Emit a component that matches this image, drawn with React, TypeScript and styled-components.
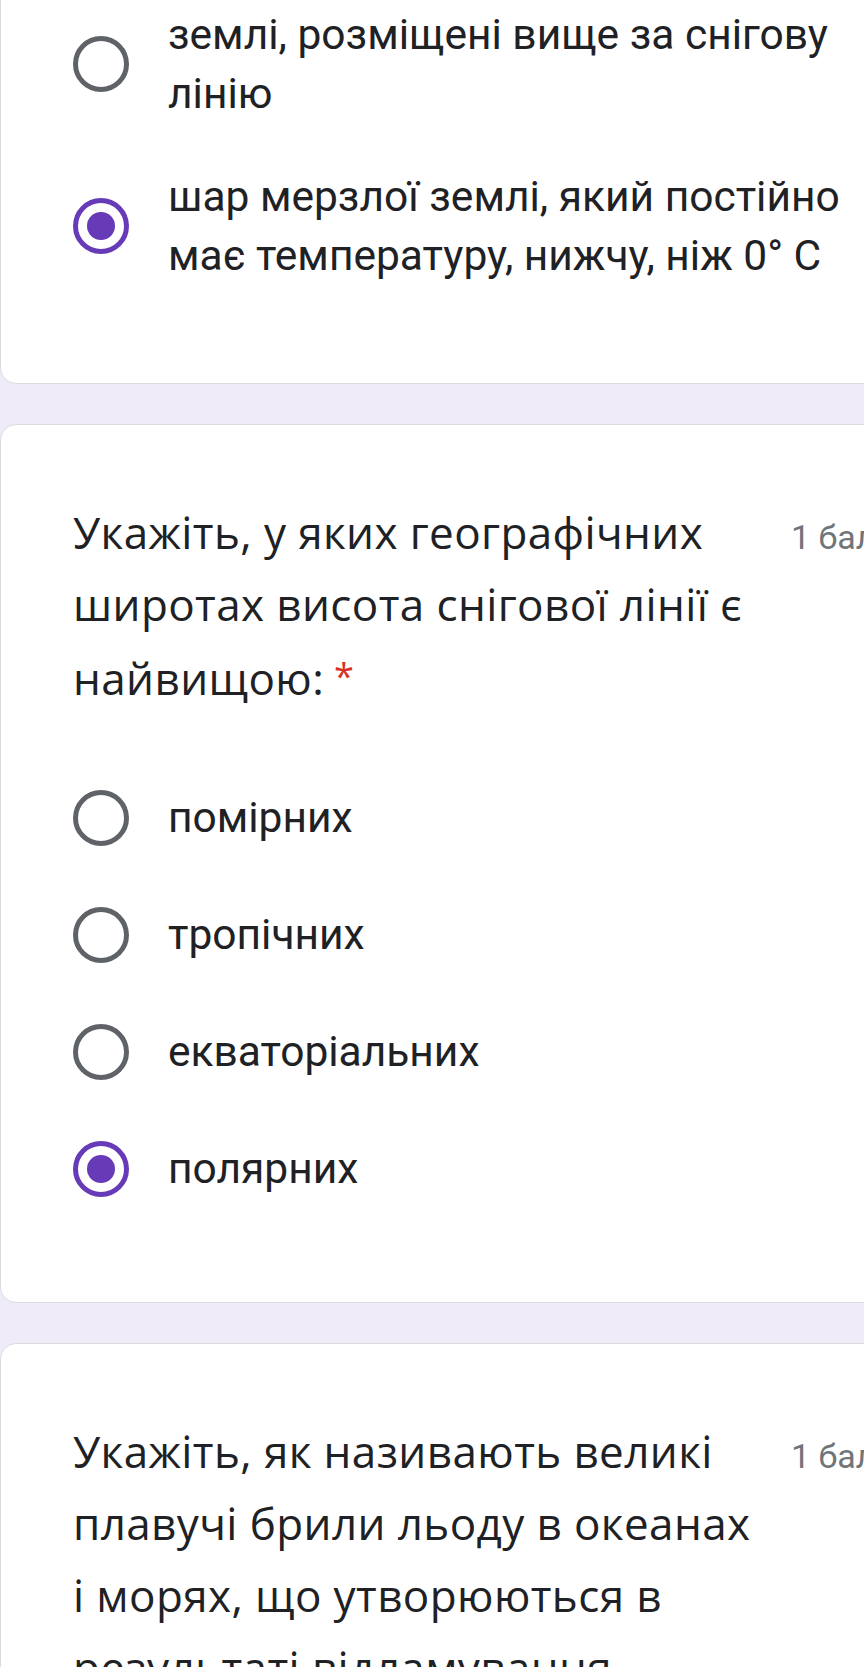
import React from "react";
import styled, { createGlobalStyle } from "styled-components";

const GlobalStyle = createGlobalStyle`
  html, body {
    margin: 0;
    padding: 0;
    background: #f0ebf8;
  }
  body {
    font-family: Roboto, "Noto Sans", sans-serif;
    -webkit-font-smoothing: antialiased;
  }
`;

const Page = styled.div`
  width: 864px;
  height: 1667px;
  overflow: hidden;
  background: #f0ebf8;
  display: flex;
  flex-direction: column;
  gap: 40px;
`;

const Card = styled.section<{ $first?: boolean }>`
  background: #ffffff;
  border: 1px solid #dadce0;
  border-radius: 16px;
  margin-right: -60px;
  margin-top: ${(p) => (p.$first ? "-18px" : "0")};
  padding: ${(p) => (p.$first ? "0 0 76px 72px" : "71px 0 75px 72px")};
  flex: none;
`;

const Header = styled.div`
  display: flex;
  align-items: baseline;
`;

const Title = styled.h2`
  flex: 0 0 690px;
  margin: 0;
  font-family: "Open Sans", "Noto Sans", sans-serif;
  font-weight: 400;
  font-size: 44px;
  line-height: 72px;
  color: #202124;
  letter-spacing: 0.4px;
`;

const Required = styled.span`
  color: #d93025;
  margin-left: 10px;
  font-size: 36px;
  vertical-align: 6px;
`;

const Points = styled.span`
  margin-left: 28px;
  font-family: Roboto, sans-serif;
  font-size: 34px;
  color: #70757a;
  white-space: nowrap;
`;

const Options = styled.div<{ $spaced?: boolean }>`
  display: flex;
  flex-direction: column;
  margin-top: ${(p) => (p.$spaced ? "45px" : "0")};
`;

const Row = styled.label`
  display: flex;
  align-items: center;
  padding: 22px 0;
`;

const RadioBox = styled.span`
  flex: none;
  width: 56px;
  height: 73px;
  display: flex;
  align-items: center;
  justify-content: center;
  margin-right: 39px;
`;

const Radio = styled.span<{ $checked?: boolean }>`
  position: relative;
  width: 56px;
  height: 56px;
  box-sizing: border-box;
  border-radius: 50%;
  border: 5px solid ${(p) => (p.$checked ? "#673ab7" : "#5f6368")};
  &::after {
    content: "";
    display: ${(p) => (p.$checked ? "block" : "none")};
    position: absolute;
    left: 50%;
    top: 50%;
    width: 28px;
    height: 28px;
    margin: -14px 0 0 -14px;
    border-radius: 50%;
    background: #673ab7;
  }
`;

const OptionText = styled.span`
  flex: 0 1 700px;
  font-family: Roboto, sans-serif;
  font-size: 42.5px;
  line-height: 59px;
  color: #202124;
`;

type Opt = { text: string; checked?: boolean };

const OptionList: React.FC<{ items: Opt[]; spaced?: boolean }> = ({ items, spaced }) => (
  <Options $spaced={spaced}>
    {items.map((o) => (
      <Row key={o.text}>
        <RadioBox>
          <Radio $checked={o.checked} />
        </RadioBox>
        <OptionText>{o.text}</OptionText>
      </Row>
    ))}
  </Options>
);

export default function App() {
  return (
    <>
      <GlobalStyle />
      <Page>
        <Card $first>
          <OptionList
            items={[
              { text: "землі, розміщені вище за снігову лінію" },
              { text: "шар мерзлої землі, який постійно має температуру, нижчу, ніж 0° С", checked: true },
            ]}
          />
        </Card>
        <Card>
          <Header>
            <Title>
              Укажіть, у яких географічних широтах висота снігової лінії є найвищою:
              <Required>*</Required>
            </Title>
            <Points>1 бал</Points>
          </Header>
          <OptionList
            spaced
            items={[
              { text: "помірних" },
              { text: "тропічних" },
              { text: "екваторіальних" },
              { text: "полярних", checked: true },
            ]}
          />
        </Card>
        <Card>
          <Header>
            <Title>
              Укажіть, як називають великі плавучі брили льоду в океанах і морях, що утворюються в
              результаті відламування частин льодовиків:
              <Required>*</Required>
            </Title>
            <Points>1 бал</Points>
          </Header>
        </Card>
      </Page>
    </>
  );
}
